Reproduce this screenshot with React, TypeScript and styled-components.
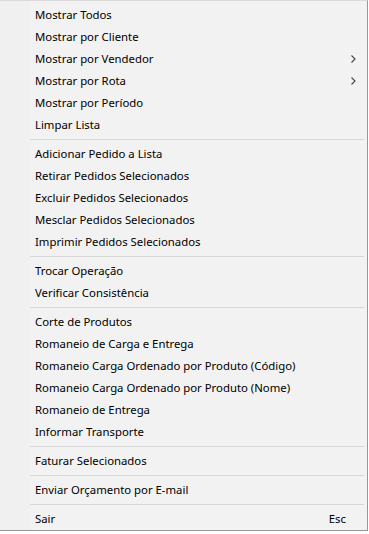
import React from 'react';
import styled, { createGlobalStyle } from 'styled-components';

type Entry =
    | { kind: 'item'; label: string; submenu?: boolean; shortcut?: string }
    | { kind: 'sep' };

const entries: Entry[] = [
    { kind: 'item', label: 'Mostrar Todos' },
    { kind: 'item', label: 'Mostrar por Cliente' },
    { kind: 'item', label: 'Mostrar por Vendedor', submenu: true },
    { kind: 'item', label: 'Mostrar por Rota', submenu: true },
    { kind: 'item', label: 'Mostrar por Período' },
    { kind: 'item', label: 'Limpar Lista' },
    { kind: 'sep' },
    { kind: 'item', label: 'Adicionar Pedido a Lista' },
    { kind: 'item', label: 'Retirar Pedidos Selecionados' },
    { kind: 'item', label: 'Excluir Pedidos Selecionados' },
    { kind: 'item', label: 'Mesclar Pedidos Selecionados' },
    { kind: 'item', label: 'Imprimir Pedidos Selecionados' },
    { kind: 'sep' },
    { kind: 'item', label: 'Trocar Operação' },
    { kind: 'item', label: 'Verificar Consistência' },
    { kind: 'sep' },
    { kind: 'item', label: 'Corte de Produtos' },
    { kind: 'item', label: 'Romaneio de Carga e Entrega' },
    { kind: 'item', label: 'Romaneio Carga Ordenado por Produto (Código)' },
    { kind: 'item', label: 'Romaneio Carga Ordenado por Produto (Nome)' },
    { kind: 'item', label: 'Romaneio de Entrega' },
    { kind: 'item', label: 'Informar Transporte' },
    { kind: 'sep' },
    { kind: 'item', label: 'Faturar Selecionados' },
    { kind: 'sep' },
    { kind: 'item', label: 'Enviar Orçamento por E-mail' },
    { kind: 'sep' },
    { kind: 'item', label: 'Sair', shortcut: 'Esc' },
];

/**
 * The popup menu, as Windows draws it.
 */
const App = () => (
    <>
        <GlobalStyle/>
        <Menu>
            {entries.map((e, i) =>
                e.kind === 'sep' ? (
                    <Separator key={i}/>
                ) : (
                    <Item key={i}>
                        <Gutter/>
                        <Label>{e.label}</Label>
                        {e.shortcut && <Shortcut>{e.shortcut}</Shortcut>}
                        {e.submenu && <Chevron/>}
                    </Item>
                )
            )}
        </Menu>
    </>
);

export default App;

const GlobalStyle = createGlobalStyle`
    html, body {
        margin: 0;
        padding: 0;
        background: #ffffff;
    }
    body {
        font-family: "Noto Sans", "Liberation Sans", sans-serif;
        font-size: 11.35px;
        color: #000;
    }
`;

/**
 * The small submenu arrow on the right.
 */
const Chevron = () => (
    <ArrowBox>
        <svg width="5" height="8" viewBox="0 0 5 8">
            <path d="M0.5 0.5 L4 4 L0.5 7.5" fill="none" stroke="#444" strokeWidth="1.1"/>
        </svg>
    </ArrowBox>
);

const Menu = styled.div`
    width: 368px;
    height: 531px;
    box-sizing: border-box;
    padding-top: 3px;
    background: linear-gradient(to right, #f0f0f0 0, #f0f0f0 30px, #f2f2f2 30px);
    border-top: 1px solid #dadada;
    border-right: 1px solid #979797;
    border-bottom: 1px solid #979797;
    display: flex;
    flex-direction: column;
`;

const Item = styled.div`
    height: 22px;
    display: flex;
    align-items: center;
    line-height: 22px;
`;

const Gutter = styled.div`
    width: 35px;
    flex: none;
`;

const Label = styled.span`
    flex: 1;
    white-space: nowrap;
`;

const Shortcut = styled.span`
    padding-right: 21px;
`;

const ArrowBox = styled.span`
    width: 16px;
    display: flex;
    align-items: center;
`;

const Separator = styled.div`
    height: 7px;
    margin-left: 30px;
    margin-right: 3px;
    display: flex;
    align-items: center;

    &::after {
        content: '';
        flex: 1;
        height: 1px;
        background: #d7d7d7;
    }
`;
